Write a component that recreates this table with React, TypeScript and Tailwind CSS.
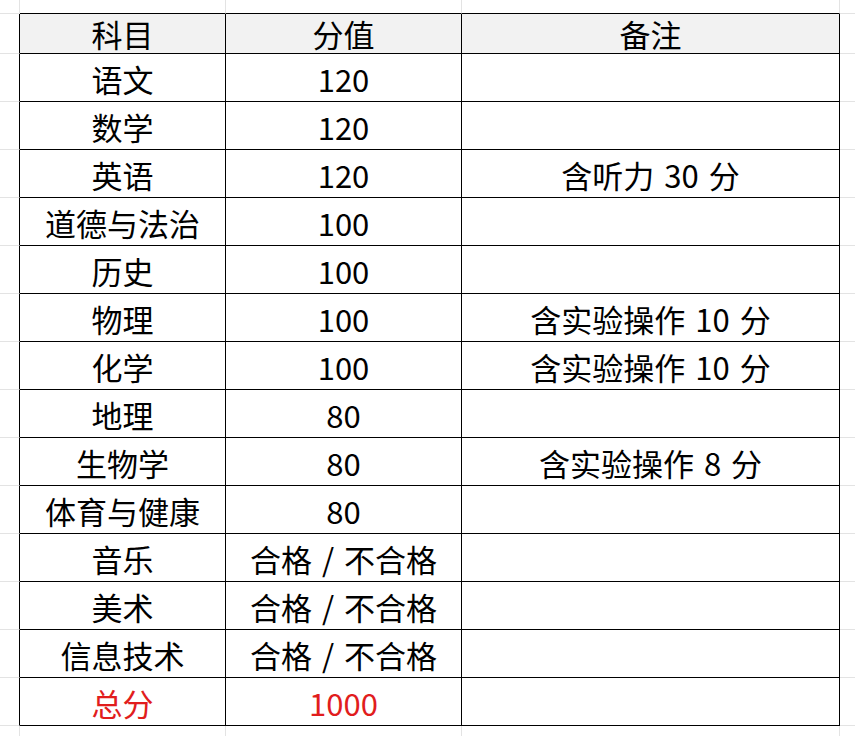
import React from 'react'

const rows: { subject: string; score: string; note?: string; red?: boolean }[] = [
  { subject: '语文', score: '120' },
  { subject: '数学', score: '120' },
  { subject: '英语', score: '120', note: '含听力 30 分' },
  { subject: '道德与法治', score: '100' },
  { subject: '历史', score: '100' },
  { subject: '物理', score: '100', note: '含实验操作 10 分' },
  { subject: '化学', score: '100', note: '含实验操作 10 分' },
  { subject: '地理', score: '80' },
  { subject: '生物学', score: '80', note: '含实验操作 8 分' },
  { subject: '体育与健康', score: '80' },
  { subject: '音乐', score: '合格 / 不合格' },
  { subject: '美术', score: '合格 / 不合格' },
  { subject: '信息技术', score: '合格 / 不合格' },
  { subject: '总分', score: '1000', red: true },
]

// 0 = spacer row above, 1 = header, 2..15 = data rows, 16 = spacer below
const ROWS = 17
const COLS = 5

function cellText(r: number, c: number): { text: string; red?: boolean } | null {
  if (r === 1) return { text: ['', '科目', '分值', '备注', ''][c] }
  if (r >= 2 && r <= 15) {
    const row = rows[r - 2]
    if (c === 1) return { text: row.subject, red: row.red }
    if (c === 2) return { text: row.score, red: row.red }
    if (c === 3) return { text: row.note ?? '' }
  }
  return null
}

export default function App() {
  const cells = []
  for (let r = 0; r < ROWS; r++) {
    for (let c = 0; c < COLS; c++) {
      const blackBottom = r <= 15 && c >= 1 && c <= 3
      const blackRight = c <= 3 && r >= 1 && r <= 15
      const header = r === 1 && c >= 1 && c <= 3
      const t = cellText(r, c)
      cells.push(
        <div
          key={`${r}-${c}`}
          className={[
            'flex items-center justify-center whitespace-nowrap',
            r >= 2 ? 'pt-[2px]' : '',
            r < 16 ? 'border-b' : '',
            c < 4 ? 'border-r' : '',
            blackBottom ? 'border-b-black' : 'border-b-[#e3e3e3]',
            blackRight ? 'border-r-black' : 'border-r-[#e3e3e3]',
            header ? 'bg-[#f2f2f2]' : 'bg-white',
            t?.red ? 'text-[#e11d1d]' : 'text-black',
          ].join(' ')}
        >
          {t?.text}
        </div>
      )
    }
  }

  return (
    <div className="w-[855px] h-[736px] overflow-hidden bg-white font-['Noto_Sans_CJK_SC',sans-serif] text-[31px] leading-none [word-spacing:3px]">
      <div className="grid h-full grid-cols-[20px_206px_236px_378px_1fr] grid-rows-[14px_40px_repeat(14,48px)_1fr]">
        {cells}
      </div>
    </div>
  )
}
